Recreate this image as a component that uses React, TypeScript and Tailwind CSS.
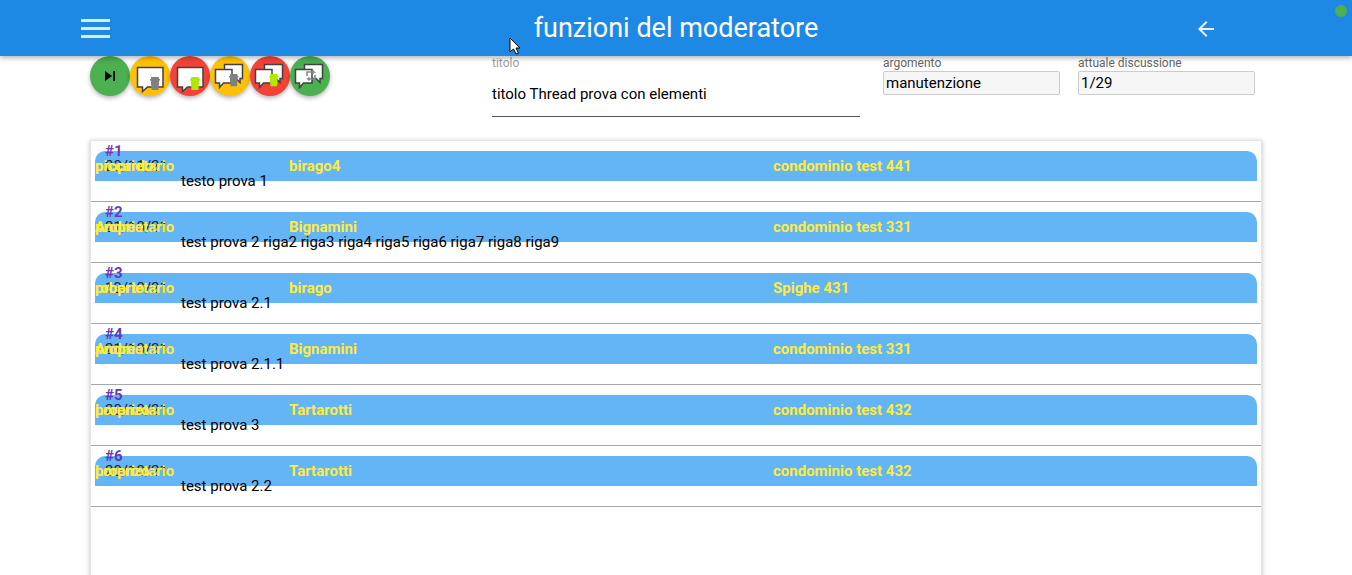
import React from "react";

type Post = {
  num: string;
  date: string;
  nick: string;
  surname: string;
  condo: string;
  text: string;
  numColor: string;
};

const posts: Post[] = [
  { num: "#1", date: "20/11/21", nick: "piccardo", surname: "birago4", condo: "condominio test 441", text: "testo prova 1", numColor: "text-[#7339b5]" },
  { num: "#2", date: "21/10/21", nick: "Andrea", surname: "Bignamini", condo: "condominio test 331", text: "test prova 2 riga2 riga3 riga4 riga5 riga6 riga7 riga8 riga9", numColor: "text-[#6e39b5]" },
  { num: "#3", date: "19/10/21", nick: "roberto", surname: "birago", condo: "Spighe 431", text: "test prova 2.1", numColor: "text-[#6a39b5]" },
  { num: "#4", date: "21/10/21", nick: "Andrea", surname: "Bignamini", condo: "condominio test 331", text: "test prova 2.1.1", numColor: "text-[#6639b5]" },
  { num: "#5", date: "20/10/21", nick: "Lorenzo", surname: "Tartarotti", condo: "condominio test 432", text: "test prova 3", numColor: "text-[#6239b5]" },
  { num: "#6", date: "20/10/21", nick: "Lorenzo", surname: "Tartarotti", condo: "condominio test 432", text: "test prova 2.2", numColor: "text-[#5e39b5]" },
];

const Bubble = ({ d }: { d: string }) => (
  <path d={d} fill="#fff" stroke="#424242" strokeWidth="1.5" strokeLinejoin="miter" />
);

const Trash = ({ x, y, color, s = 1 }: { x: number; y: number; color: string; s?: number }) => (
  <g transform={`translate(${x} ${y}) scale(${s})`} fill={color}>
    <rect x="1" y="0" width="8" height="2" rx="0.6" />
    <path d="M0 2h10v1.4H9.2L8.4 13H1.6L0.8 3.4H0z" />
  </g>
);

const SingleBubble = ({ color }: { color: string }) => (
  <svg viewBox="0 0 40 40" className="w-10 h-10">
    <Bubble d="M7.5 11.5h25.5v19.5H17.5L12.5 35.5V31H7.5z" />
    <Trash x={20} y={21} color={color} />
  </svg>
);

const DoubleBubble = ({ color }: { color: string }) => (
  <svg viewBox="0 0 40 40" className="w-10 h-10">
    <Bubble d="M14.5 8.5h18v14H30v4l-4-4H14.5z" />
    <Bubble d="M5.5 13.5h16.5v13.5H13.5L9.5 31.5V27h-4z" />
    <Trash x={19} y={18} color={color} s={0.95} />
  </svg>
);

const SwapBubble = () => (
  <svg viewBox="0 0 40 40" className="w-10 h-10">
    <Bubble d="M14.5 8.5h18v14H30v4l-4-4H14.5z" />
    <Bubble d="M5.5 13.5h16.5v13.5H13.5L9.5 31.5V27h-4z" />
    <path
      d="M17 20v-4h7l-1.5-1.5M24 16l-1.5 1.5M25 19v4h-7l1.5 1.5M18 23l1.5-1.5"
      fill="none"
      stroke="#8a8a8a"
      strokeWidth="1.6"
    />
  </svg>
);

const RoundButton = ({ bg, children }: { bg: string; children: React.ReactNode }) => (
  <button className={`w-10 h-10 rounded-full flex items-center justify-center shrink-0 shadow-[0_2px_4px_rgba(0,0,0,0.3)] ${bg}`}>
    {children}
  </button>
);

const ReadonlyField = ({ label, value, className }: { label: string; value: string; className: string }) => (
  <div className={`flex flex-col ${className}`}>
    <span className="text-[12px] leading-[15px] text-[#666666] whitespace-nowrap">{label}</span>
    <div className="h-6 border border-[#cccccc] rounded-[2px] bg-[#f6f6f6] px-[2px] text-[15px] leading-[22px] text-black">
      {value}
    </div>
  </div>
);

const PostRow = ({ post }: { post: Post }) => (
  <div className="h-[61px] border-b border-[#a8a8a8] px-1 pt-[10px]">
    <div className="h-[30px] bg-[#64b5f6] rounded-t-[10px] flex items-center text-[15px] font-bold text-[#ffeb3b]">
      <div className="w-[194px] grid shrink-0 leading-[30px] h-[30px]">
        <span className={`[grid-area:1/1] ml-[10px] -mt-[15px] ${post.numColor}`}>{post.num}</span>
        <span className="[grid-area:1/1] ml-[10px] font-normal text-[#222222]">{post.date}</span>
        <span className="[grid-area:1/1]">{post.nick}</span>
        <span className="[grid-area:1/1]">proprietario</span>
      </div>
      <div className="w-[484px] shrink-0">{post.surname}</div>
      <div>{post.condo}</div>
    </div>
    <div className="ml-[86px] -mt-[9px] text-[15px] leading-[18px] text-black relative">{post.text}</div>
  </div>
);

const App = () => {
  return (
    <div className="relative h-[575px] overflow-hidden bg-white font-['Roboto',sans-serif]">
      <header className="relative z-10 h-14 bg-[#1e88e5] shadow-[0_2px_5px_rgba(0,0,0,0.3)] flex items-center text-white">
        <div className="w-[81px] shrink-0" />
        <div className="w-[29px] flex flex-col gap-[5px] shrink-0">
          <span className="h-[3px] bg-[#e3e8ee]" />
          <span className="h-[3px] bg-[#e3e8ee]" />
          <span className="h-[3px] bg-[#e3e8ee]" />
        </div>
        <h1 className="w-[1132px] text-center text-[27px] font-normal mt-[1px]">funzioni del moderatore</h1>
        <svg viewBox="0 0 24 24" className="w-6 h-6 -ml-[48px] mt-[2px] shrink-0" fill="#e8eef5">
          <path d="M20 11H7.83l5.59-5.59L12 4l-8 8 8 8 1.41-1.41L7.83 13H20v-2z" />
        </svg>
      </header>

      <span className="absolute z-20 top-[5px] right-[5px] w-3 h-3 rounded-full bg-[#4caf50]" />
      <svg viewBox="0 0 12 18" className="absolute z-20 left-[509px] top-[37px] w-[12px] h-[18px]">
        <path d="M1 1v14l3.5-3 2.5 5 2.5-1-2.5-5H11z" fill="#fff" stroke="#000" strokeWidth="1" />
      </svg>

      <div className="h-[84px] flex pl-[90px]">
        <div className="flex w-[240px] h-10">
          <RoundButton bg="bg-[#4caf50]">
            <svg viewBox="0 0 24 24" className="w-5 h-5" fill="#000">
              <path d="M6 18l8.5-6L6 6v12zM16 6v12h2V6h-2z" />
            </svg>
          </RoundButton>
          <RoundButton bg="bg-[#ffc107]"><SingleBubble color="#808080" /></RoundButton>
          <RoundButton bg="bg-[#f44336]"><SingleBubble color="#aeea00" /></RoundButton>
          <RoundButton bg="bg-[#ffc107]"><DoubleBubble color="#808080" /></RoundButton>
          <RoundButton bg="bg-[#f44336]"><DoubleBubble color="#aeea00" /></RoundButton>
          <RoundButton bg="bg-[#4caf50]"><SwapBubble /></RoundButton>
        </div>
        <div className="ml-[162px] w-[368px] h-[61px] border-b border-[#555555] flex flex-col">
          <span className="text-[12px] leading-[14px] text-[#a0a0a0]">titolo</span>
          <span className="mt-[15px] text-[15px] leading-[18px] text-black">titolo Thread prova con elementi</span>
        </div>
        <ReadonlyField label="argomento" value="manutenzione" className="ml-[23px] w-[177px]" />
        <ReadonlyField label="attuale discussione" value="1/29" className="ml-[18px] w-[177px]" />
      </div>

      <main className="ml-[90px] w-[1172px] h-[500px] border border-[#e4e4e4] shadow-[0_1px_5px_rgba(0,0,0,0.25)]">
        {posts.map((post) => (
          <PostRow key={post.num} post={post} />
        ))}
      </main>
    </div>
  );
};

export default App;
